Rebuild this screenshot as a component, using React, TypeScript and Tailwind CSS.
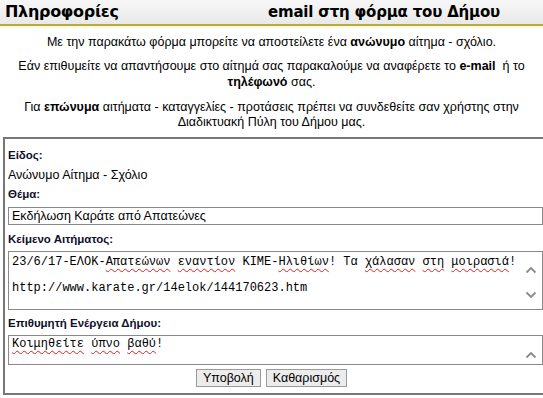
import React from "react";

const W = ({ children }: { children: React.ReactNode }) => (
  <span className="underline decoration-wavy decoration-[#e02020] decoration-1 underline-offset-[3px]">{children}</span>
);

const Up = () => (
  <svg width="12" height="8" viewBox="0 0 12 8" className="block">
    <path d="M1.5 6.5 L6 2 L10.5 6.5" fill="none" stroke="#8a8a8a" strokeWidth="1.8" />
  </svg>
);
const Down = () => (
  <svg width="12" height="8" viewBox="0 0 12 8" className="block">
    <path d="M1.5 1.5 L6 6 L10.5 1.5" fill="none" stroke="#8a8a8a" strokeWidth="1.8" />
  </svg>
);

export default function App() {
  const sans = { fontFamily: '"Liberation Sans", Arial, sans-serif' };
  const mono = { fontFamily: '"Liberation Mono", "Courier New", monospace' };
  return (
    <div className="w-[543px] h-[398px] overflow-hidden bg-white text-black" style={sans}>
      {/* header */}
      <div className="h-[24px] bg-gradient-to-b from-[#f7f7f7] to-[#e9e9e9] flex items-center" style={{ fontFamily: '"DejaVu Sans", Verdana, sans-serif' }}>
        <div className="w-[268px] pl-[5px] font-bold text-[16px] tracking-[-0.3px]">Πληροφορίες</div>
        <div className="font-bold text-[15px] tracking-[-0.2px]">email στη φόρμα του Δήμου</div>
      </div>
      <div className="h-[2px] bg-[#b9ab35]" />
      <div className="h-[2px] bg-[#fbf8e4]" />

      {/* intro */}
      <div className="text-center text-[12.5px] leading-[15.5px] pt-[7px] px-4">
        <p>Με την παρακάτω φόρμα μπορείτε να αποστείλετε ένα <b>ανώνυμο</b> αίτημα - σχόλιο.</p>
        <p className="mt-[8.5px]">
          Εάν επιθυμείτε να απαντήσουμε στο αίτημά σας παρακαλούμε να αναφέρετε το <b>e-mail</b>&nbsp; ή το <b>τηλέφωνό</b> σας.
        </p>
        <p className="mt-[9.5px]">
          Για <b>επώνυμα</b> αιτήματα - καταγγελίες - προτάσεις πρέπει να συνδεθείτε σαν χρήστης στην Διαδικτυακή Πύλη του Δήμου μας.
        </p>
      </div>

      {/* form box */}
      <div className="mt-[6px] ml-[3px] w-[560px] h-[258px] border-2 border-[#777] border-r-0 pl-[3px] pt-[9px]">
        <div className="w-[535px]">
          <div className="font-bold text-[11.5px] text-[#10102a] leading-[14px]">Είδος:</div>
          <div className="text-[12.5px] leading-[16px] mt-[5px]">Ανώνυμο Αίτημα - Σχόλιο</div>
          <div className="font-bold text-[11.5px] text-[#10102a] leading-[14px] mt-[4px]">Θέμα:</div>
          <div className="mt-[6px] h-[18px] border border-[#8a8a8a] pl-[3px] text-[12.5px] leading-[16px]">Εκδήλωση Καράτε από Απατεώνες</div>
          <div className="font-bold text-[11.5px] text-[#10102a] leading-[14px] mt-[7px]">Κείμενο Αιτήματος:</div>
          <div className="mt-[5px] h-[59px] border border-[#8a8a8a] flex" style={mono}>
            <div className="flex-1 pl-[3px] pt-[4px] text-[12px] leading-[13px] whitespace-pre">
              <div>23/6/17-ΕΛΟΚ-<W>Απατεώνων</W> <W>εναντίον</W> ΚΙΜΕ-<W>Ηλιθίων</W>! Τα <W>χάλασαν</W> <W>στη</W> <W>μοιρασιά</W>!</div>
              <div className="mt-[13px]">http://www.karate.gr/14elok/144170623.htm</div>
            </div>
            <div className="w-[22px] flex flex-col items-center pt-[14px] gap-[17px]">
              <Up />
              <Down />
            </div>
          </div>
          <div className="font-bold text-[11.5px] text-[#10102a] leading-[14px] mt-[6px]">Επιθυμητή Ενέργεια Δήμου:</div>
          <div className="mt-[5px] h-[30px] border border-[#8a8a8a] flex" style={mono}>
            <div className="flex-1 pl-[3px] pt-[2px] text-[12px] leading-[13px] whitespace-pre">
              <W>Κοιμηθείτε</W> <W>ύπνο</W> <W>βαθύ</W>!
            </div>
            <div className="w-[22px] flex flex-col items-center pt-[15px]">
              <Up />
            </div>
          </div>
          <div className="flex justify-center gap-[5px] mt-[4px] pr-[8px]">
            <div className="h-[18px] px-[6px] bg-[#ececec] border border-[#9a9a9a] text-[12.5px] leading-[16px] flex items-center">Υποβολή</div>
            <div className="h-[18px] px-[6px] bg-[#ececec] border border-[#9a9a9a] text-[12.5px] leading-[16px] flex items-center">Καθαρισμός</div>
          </div>
        </div>
      </div>
    </div>
  );
}
